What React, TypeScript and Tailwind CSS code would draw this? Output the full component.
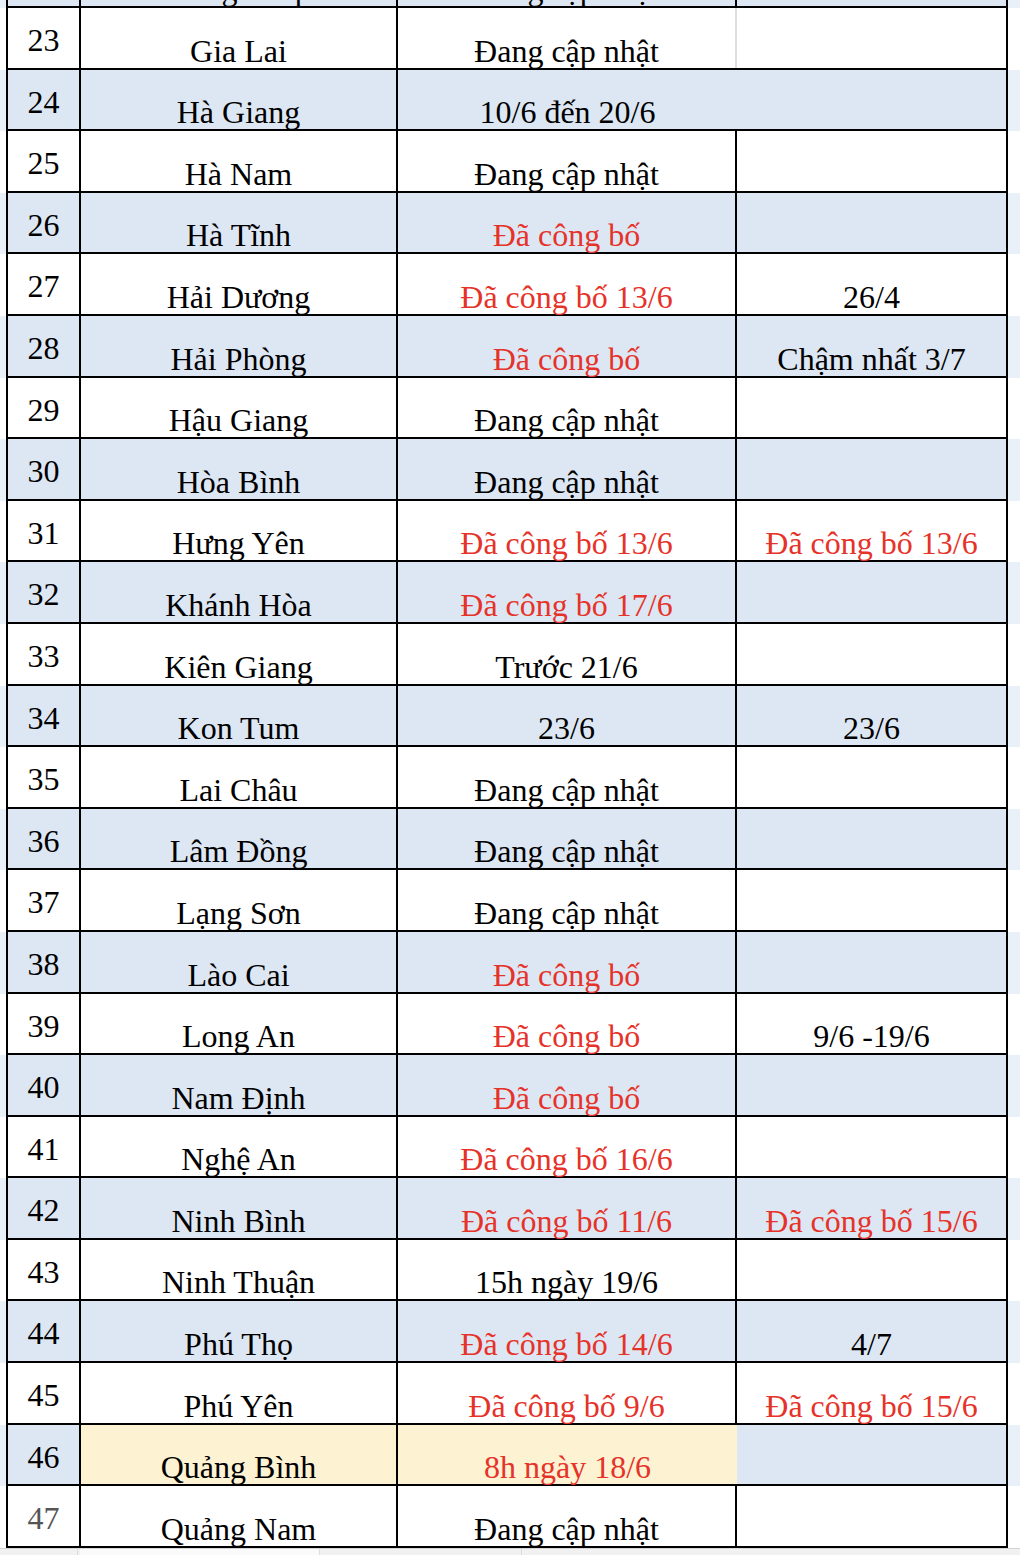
import { clsx } from "clsx";

type Row = {
  n: number;
  name: string;
  c3?: string;
  c3red?: boolean;
  c4?: string;
  c4red?: boolean;
  merge?: boolean; // col3 + col4 merged
  softLine?: boolean; // faint gridline between col3 and col4
  highlight?: boolean; // yellow name + col3
  faded?: boolean;
};

const rows: Row[] = [
  { n: 22, name: "Đồng Tháp", c3: "Đang cập nhật", c4: "" },
  { n: 23, name: "Gia Lai", c3: "Đang cập nhật", softLine: true },
  { n: 24, name: "Hà Giang", c3: "10/6 đến 20/6", merge: true },
  { n: 25, name: "Hà Nam", c3: "Đang cập nhật" },
  { n: 26, name: "Hà Tĩnh", c3: "Đã công bố", c3red: true },
  { n: 27, name: "Hải Dương", c3: "Đã công bố 13/6", c3red: true, c4: "26/4" },
  { n: 28, name: "Hải Phòng", c3: "Đã công bố", c3red: true, c4: "Chậm nhất 3/7" },
  { n: 29, name: "Hậu Giang", c3: "Đang cập nhật" },
  { n: 30, name: "Hòa Bình", c3: "Đang cập nhật" },
  { n: 31, name: "Hưng Yên", c3: "Đã công bố 13/6", c3red: true, c4: "Đã công bố 13/6", c4red: true },
  { n: 32, name: "Khánh Hòa", c3: "Đã công bố 17/6", c3red: true },
  { n: 33, name: "Kiên Giang", c3: "Trước 21/6" },
  { n: 34, name: "Kon Tum", c3: "23/6", c4: "23/6" },
  { n: 35, name: "Lai Châu", c3: "Đang cập nhật" },
  { n: 36, name: "Lâm Đồng", c3: "Đang cập nhật" },
  { n: 37, name: "Lạng Sơn", c3: "Đang cập nhật" },
  { n: 38, name: "Lào Cai", c3: "Đã công bố", c3red: true },
  { n: 39, name: "Long An", c3: "Đã công bố", c3red: true, c4: "9/6 -19/6" },
  { n: 40, name: "Nam Định", c3: "Đã công bố", c3red: true },
  { n: 41, name: "Nghệ An", c3: "Đã công bố 16/6", c3red: true },
  { n: 42, name: "Ninh Bình", c3: "Đã công bố 11/6", c3red: true, c4: "Đã công bố 15/6", c4red: true },
  { n: 43, name: "Ninh Thuận", c3: "15h ngày 19/6" },
  { n: 44, name: "Phú Thọ", c3: "Đã công bố 14/6", c3red: true, c4: "4/7" },
  { n: 45, name: "Phú Yên", c3: "Đã công bố 9/6", c3red: true, c4: "Đã công bố 15/6", c4red: true },
  { n: 46, name: "Quảng Bình", c3: "8h ngày 18/6", c3red: true, highlight: true },
  { n: 47, name: "Quảng Nam", c3: "Đang cập nhật", faded: true },
];

function SheetRow({ row, first }: { row: Row; first?: boolean }) {
  const blue = row.n % 2 === 0;
  const cellBg = blue ? "bg-[#dde7f4]" : "bg-white";
  const fill = row.highlight ? "bg-[#fdf2d2]" : cellBg;

  return (
    <div
      className={clsx(
        "flex h-[61.6px] shrink-0 pl-[6px] pr-[12px]",
        blue ? "bg-[#eaf0f8]" : "bg-white",
        first && "-mt-[53.6px]",
      )}
    >
      <div className="flex w-[1002px] border-x-2 border-b-2 border-black">
        {/* STT */}
        <div
          className={clsx(
            "flex w-[73px] justify-center border-r-2 border-black pt-[16px] leading-none",
            cellBg,
            row.faded ? "text-[#555]" : "text-black",
          )}
        >
          {row.n}
        </div>

        {/* Tỉnh */}
        <div className={clsx("flex w-[317px] items-end justify-center border-r-2 border-black pb-[1px] leading-none", fill)}>
          {row.name}
        </div>

        {/* Thời gian công bố */}
        <div
          className={clsx(
            "flex w-[339px] items-end justify-center pb-[1px] leading-none",
            fill,
            row.merge || row.highlight ? "" : "border-r-2",
            row.softLine ? "border-[#dedede]" : "border-black",
            row.c3red ? "text-[#e6332a]" : "text-black",
          )}
        >
          {row.c3}
        </div>

        <div
          className={clsx(
            "flex flex-1 items-end justify-center pb-[1px] leading-none",
            cellBg,
            row.c4red ? "text-[#e6332a]" : "text-black",
          )}
        >
          {row.c4}
        </div>
      </div>
    </div>
  );
}

export default function App() {
  return (
    <div className="font-[Liberation_Serif,serif]">
      <div className="flex h-[1555px] w-[1020px] flex-col overflow-hidden bg-white text-[32px]">
        {rows.map((r, i) => (
          <SheetRow key={r.n} row={r} first={i === 0} />
        ))}
        {/* sheet tab strip */}
        <div className="flex flex-1 gap-[2px] border-t border-[#d4d4d4] bg-[#f1f1f1] pl-[8px]">
          <div className="w-[70px] border-r border-[#dcdcdc]" />
          <div className="w-[240px] border-r border-[#dcdcdc] bg-[#fafafa]" />
          <div className="w-[200px] border-r border-[#dcdcdc]" />
        </div>
      </div>
    </div>
  );
}
